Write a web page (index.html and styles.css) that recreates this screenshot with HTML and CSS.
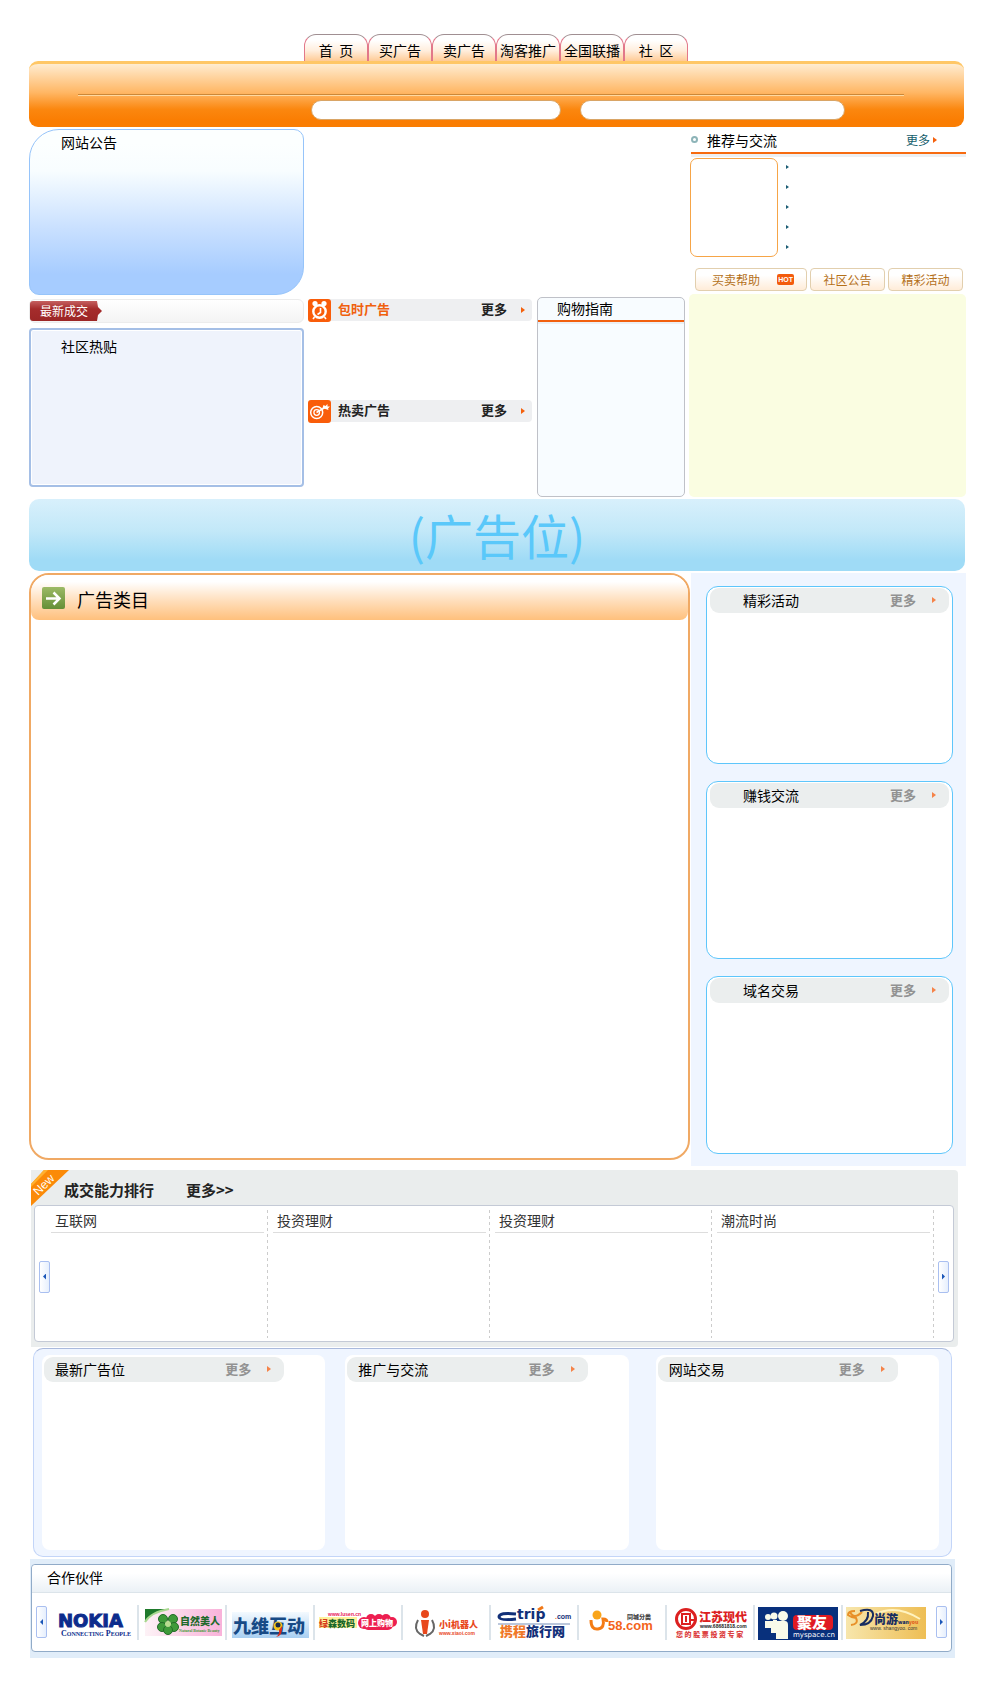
FILE: index.html
```html
<!DOCTYPE html>
<html lang="zh-CN">
<head>
<meta charset="utf-8">
<meta name="viewport" content="width=device-width, initial-scale=1">
<title>广告交易</title>
<link rel="stylesheet" href="styles.css">
</head>
<body>
<div class="page">
  <nav class="tabs">
    <a href="#">首&nbsp; 页</a>
    <a href="#">买广告</a>
    <a href="#">卖广告</a>
    <a href="#">淘客推广</a>
    <a href="#">全国联播</a>
    <a href="#">社&nbsp; 区</a>
  </nav>
  <header class="masthead">
    <hr class="rule">
    <form class="search">
      <input class="field" type="text" aria-label="关键词">
      <input class="field field-wide" type="text" aria-label="搜索">
    </form>
  </header>

  <div class="top">
    <div class="left">
      <section class="notice"><h2>网站公告</h2></section>
      <section class="deals"><h2>最新成交</h2></section>
      <section class="posts"><h2>社区热贴</h2></section>
    </div>

    <div class="center">
      <div class="slot"></div>
      <div class="center-row">
        <div class="ads">
          <section class="ad-block">
            <div class="ad-head">
              <svg class="ad-icon" viewBox="0 0 23 23" aria-hidden="true">
                <rect width="23" height="23" rx="3" fill="#f95d0a"/>
                <circle cx="7" cy="4.500" r="2.600" fill="#fff"/><circle cx="16" cy="4.500" r="2.600" fill="#fff"/>
                <circle cx="11.500" cy="12.500" r="6.200" fill="#f95d0a" stroke="#fff" stroke-width="2.400"/>
                <path d="M12.500 9v4.500l-3 2M6.500 18l-1.500 2M16.500 18l1.500 2" fill="none" stroke="#fff" stroke-width="1.600"/>
              </svg>
              <h2 class="hot">包时广告</h2>
              <a href="#">更多</a><i class="arrow"></i>
            </div>
          </section>
          <section class="ad-block">
            <div class="ad-head">
              <svg class="ad-icon" viewBox="0 0 23 23" aria-hidden="true">
                <rect width="23" height="23" rx="3" fill="#f95d0a"/>
                <circle cx="8.700" cy="12.500" r="6" fill="none" stroke="#fff" stroke-width="1.500"/>
                <circle cx="8.700" cy="12.500" r="2.800" fill="none" stroke="#fff" stroke-width="1.300"/>
                <path d="M8.500 12.500L17 7.500" stroke="#fff" stroke-width="1.500"/>
                <path d="M14.500 8l1-3 2 1 2-2 0 2.500 2.500 0-2 2 .5 1.500z" fill="#fff"/>
              </svg>
              <h2>热卖广告</h2>
              <a href="#">更多</a><i class="arrow"></i>
            </div>
          </section>
        </div>
        <section class="guide"><h2>购物指南</h2></section>
      </div>
    </div>

    <div class="right">
      <div class="rec-head">
        <i class="ring"></i><h2>推荐与交流</h2><a href="#">更多</a><i class="arrow"></i>
      </div>
      <div class="rec-body">
        <div class="thumb"></div>
        <ul class="bullets"><li></li><li></li><li></li><li></li><li></li></ul>
      </div>
      <div class="pills">
        <button type="button" class="pill pill-hot">买卖帮助<span class="badge">HOT</span></button>
        <button type="button" class="pill">社区公告</button>
        <button type="button" class="pill">精彩活动</button>
      </div>
      <div class="pane"></div>
    </div>
  </div>

  <div class="banner">(广告位)</div>

  <div class="main">
    <section class="catalog">
      <div class="catalog-head">
        <svg class="go" viewBox="0 0 23 22" aria-hidden="true">
          <defs><linearGradient id="leaf" x1="0" y1="0" x2="0" y2="1"><stop offset="0" stop-color="#9cba66"/><stop offset="1" stop-color="#658f36"/></linearGradient></defs>
          <rect width="23" height="22" rx="2" fill="url(#leaf)"/>
          <path d="M4 11.500h13M11.500 5.500l6 6-6 6" fill="none" stroke="#fff" stroke-width="2.500"/>
        </svg>
        <h2>广告类目</h2>
      </div>
    </section>
    <aside class="side">
      <section class="card"><div class="bar"><h2>精彩活动</h2><a href="#">更多</a><i class="arrow"></i></div></section>
      <section class="card"><div class="bar"><h2>赚钱交流</h2><a href="#">更多</a><i class="arrow"></i></div></section>
      <section class="card"><div class="bar"><h2>域名交易</h2><a href="#">更多</a><i class="arrow"></i></div></section>
    </aside>
  </div>

  <section class="rank">
    <svg class="ribbon" viewBox="0 0 38 36" aria-hidden="true">
      <path d="M13 0h25L0 36V14z" fill="#fb8a08"/>
      <path d="M13 0h4L0 17v-3z" fill="#ffb030"/>
      <text x="7" y="26" transform="rotate(-44 7 26)" class="ribbon-text">New</text>
    </svg>
    <div class="rank-head"><h2>成交能力排行</h2><a href="#">更多&gt;&gt;</a></div>
    <div class="rank-panel">
      <button type="button" class="step" aria-label="上一页"><i class="tri tri-left"></i></button>
      <div class="rank-cols">
        <div class="rank-col"><h3>互联网</h3></div>
        <div class="rank-col"><h3>投资理财</h3></div>
        <div class="rank-col"><h3>投资理财</h3></div>
        <div class="rank-col"><h3>潮流时尚</h3></div>
      </div>
      <button type="button" class="step" aria-label="下一页"><i class="tri"></i></button>
    </div>
  </section>

  <div class="trio">
    <section class="tile"><div class="bar"><h2>最新广告位</h2><a href="#">更多</a><i class="arrow"></i></div></section>
    <section class="tile"><div class="bar"><h2>推广与交流</h2><a href="#">更多</a><i class="arrow"></i></div></section>
    <section class="tile"><div class="bar"><h2>网站交易</h2><a href="#">更多</a><i class="arrow"></i></div></section>
  </div>

  <footer class="partners">
    <div class="partners-panel">
      <h2>合作伙伴</h2>
      <div class="strip">
        <button type="button" class="step" aria-label="向左"><i class="tri tri-left"></i></button>
        <div class="logos">
          <a href="#"><svg viewBox="0 0 80 36">
            <text x="4" y="22" font-family="DejaVu Sans" font-weight="bold" font-size="18" fill="#0c2c8c" stroke="#0c2c8c">NOKIA</text>
            <text x="7" y="31" font-family="Liberation Serif" font-weight="bold" font-size="8" fill="#0c2c8c">C<tspan font-size="6">ONNECTING</tspan> P<tspan font-size="6">EOPLE</tspan></text>
          </svg></a>
          <a href="#"><svg viewBox="0 0 80 36">
            <defs><linearGradient id="rose"><stop offset="0" stop-color="#fdf2f6"/><stop offset="1" stop-color="#f9b2da"/></linearGradient></defs>
            <rect x="3" y="4" width="77" height="27" fill="url(#rose)"/>
            <path d="M3 4h24Q9 7 3 17z" fill="#1f7a2c"/><path d="M27 4Q9 7 3 17" fill="none" stroke="#a8d890" stroke-width="2"/>
            <g fill="#3f9a3a" stroke="#226c28"><circle cx="21" cy="14" r="4.500"/><circle cx="31" cy="14" r="4.500"/><circle cx="20" cy="22" r="4.500"/><circle cx="32" cy="22" r="4.500"/><circle cx="26" cy="25" r="4.500"/></g>
            <circle cx="26" cy="19" r="3" fill="#b8dc90"/>
            <text x="38" y="20" class="cn" font-size="10" fill="#1e6a2a">自然美人</text>
            <text x="37" y="27" font-family="Liberation Serif" font-weight="bold" font-size="4" fill="#3f9a3a">Natural Botanic Beauty</text>
          </svg></a>
          <a href="#"><svg viewBox="0 0 80 36">
            <defs><linearGradient id="sky" x1="0" y1="0" x2="0" y2="1"><stop offset="0" stop-color="#f4faff"/><stop offset="1" stop-color="#a8cff2"/></linearGradient></defs>
            <rect x="2" y="7" width="77" height="26" fill="url(#sky)"/>
            <text x="3" y="28" class="cn" font-size="18" fill="#174a86">九维互动</text>
            <circle cx="48" cy="21" r="4.500" fill="#f5c51c"/><circle cx="48" cy="20" r="2.500" fill="#182848"/>
            <path d="M52 21q1 10-6 11q4-3 3-7z" fill="#d92c1c"/>
          </svg></a>
          <a href="#"><svg viewBox="0 0 80 36">
            <rect x="1" y="12" width="38" height="11" fill="#fff29c"/>
            <text x="1" y="22" class="cn" font-size="9" fill="#17672b"><tspan fill="#d53a1a">绿</tspan>森数码</text>
            <text x="10" y="11" font-family="Liberation Sans" font-weight="bold" font-size="5" fill="#e82058">www.lusen.cn</text>
            <g fill="#ed1e50"><circle cx="46" cy="18" r="6"/><circle cx="53" cy="14" r="5"/><circle cx="61" cy="14" r="5"/><circle cx="68" cy="14" r="5"/><circle cx="74" cy="17" r="5"/><rect x="45" y="13" width="30" height="12" rx="5"/></g>
            <text x="43" y="21" class="cn" font-size="8" fill="#fff">网上购物</text>
          </svg></a>
          <a href="#"><svg viewBox="0 0 80 36">
            <circle cx="19" cy="9" r="4" fill="#e8481c"/><path d="M15 15h8l-2 14h-4z" fill="#e8481c"/>
            <path d="M12 15q-5 9 2 14l4 2M26 15q5 9-2 14l-4 2" fill="none" stroke="#666" stroke-width="2"/>
            <text x="33" y="23" class="cn" font-size="9" fill="#e8481c">小i机器人</text>
            <text x="33" y="30" font-family="Liberation Sans" font-weight="bold" font-size="5" fill="#e8481c">www.xiaoi.com</text>
          </svg></a>
          <a href="#"><svg viewBox="0 0 80 36">
            <path d="M22 9Q5 7 5 12Q6 16 22 14" fill="none" stroke="#123078" stroke-width="3"/>
            <text x="23" y="14" font-family="DejaVu Sans" font-weight="bold" font-size="14" fill="#123078">trip</text>
            <path d="M44 5l5-3" stroke="#f07818" stroke-width="3"/>
            <text x="61" y="14" font-family="Liberation Sans" font-weight="bold" font-size="7" fill="#123078"><tspan fill="#f07828">.</tspan>com</text>
            <path d="M4 19h72" stroke="#7890b8"/>
            <text x="6" y="31" class="cn" font-size="13" fill="#123078"><tspan fill="#f07828">携程</tspan>旅行网</text>
          </svg></a>
          <a href="#"><svg viewBox="0 0 80 36">
            <circle cx="15" cy="10" r="4.500" fill="#f9a51a"/><path d="M9 15q0 10 7 9q7-1 5-10q4 0 4 3" fill="none" stroke="#f47c14" stroke-width="3"/>
            <text x="26" y="25" font-family="Liberation Sans" font-weight="bold" font-size="13" fill="#f4641a">58.com</text>
            <text x="45" y="14" class="cn" font-size="6" fill="#444">同城分类</text>
          </svg></a>
          <a href="#"><svg viewBox="0 0 80 36">
            <circle cx="16" cy="14" r="9.500" fill="#fff" stroke="#dc2020" stroke-width="3"/>
            <rect x="12" y="9" width="8" height="10" fill="none" stroke="#dc2020" stroke-width="2"/><path d="M16 11v6M21 15h5" stroke="#dc2020" stroke-width="2"/>
            <text x="29" y="17" class="cn" font-size="12" fill="#dc2020">江苏现代</text>
            <text x="30" y="23" font-family="Liberation Sans" font-weight="bold" font-size="5" fill="#222">www.68681818.com</text>
            <text x="6" y="32" class="cn" font-size="7" fill="#dc4040">您 的 股 票 投 资 专 家</text>
          </svg></a>
          <a href="#"><svg viewBox="0 0 80 36">
            <rect y="2" width="80" height="33" fill="#08307c"/>
            <g fill="#f8faea"><circle cx="10" cy="12" r="3"/><circle cx="16" cy="11" r="3.500"/><circle cx="25" cy="11" r="5"/><path d="M7 16h8v-1h4v1h8q3 0 3 4v14H18v-6h-5v-5H7z"/></g>
            <rect x="35" y="10" width="40" height="15" rx="4" fill="#e01a22"/>
            <text x="39" y="23" class="cn" font-size="15" fill="#fff">聚友</text>
            <text x="35" y="32" font-family="DejaVu Sans" font-size="7" fill="#fff">myspace.cn</text>
          </svg></a>
          <a href="#"><svg viewBox="0 0 80 36">
            <defs><linearGradient id="gold"><stop offset="0" stop-color="#f7e6ac"/><stop offset="1" stop-color="#eebe54"/></linearGradient></defs>
            <rect y="2" width="80" height="32" fill="url(#gold)"/>
            <path d="M9 6q-7 0-7 4q4 3 8 3q3 6-5 7M4 7q4 8 12 0" fill="none" stroke="#e89028" stroke-width="2"/>
            <path d="M14 6q14-4 13 5q-2 9-13 9q9-4 8-13" fill="none" stroke="#172c60" stroke-width="2"/>
            <path d="M30 9q20-10 44 5" fill="none" stroke="#fff3c0" stroke-width="2"/>
            <text x="28" y="19" class="cn" font-size="12" fill="#172c60">尚游<tspan font-size="5">wan</tspan><tspan font-size="5" fill="#e06020">you</tspan></text>
            <text x="24" y="25" font-family="Liberation Sans" font-size="5" fill="#333">www. shangyoo. com</text>
          </svg></a>
        </div>
        <button type="button" class="step" aria-label="向右"><i class="tri"></i></button>
      </div>
    </div>
  </footer>
</div>
</body>
</html>
```
FILE: styles.css
```css
* { box-sizing: border-box; }

body {
  margin: 0;
  background: #fff;
  color: #000;
  font: 14px/20px "Noto Sans CJK SC", sans-serif;
}

h2, h3 { margin: 0; font-size: 14px; line-height: 20px; font-weight: 400; }
a { color: inherit; text-decoration: none; }
button { font: inherit; padding: 0; cursor: pointer; }

.page { padding: 34px 34px 28px 29px; }

.arrow {
  width: 0;
  height: 0;
  border: solid transparent;
  border-width: 3px 0 3px 4px;
  border-left-color: #f4600c;
}

/* Tabs and header */
.tabs { display: flex; margin-left: 275px; }
.tabs a {
  width: 64px;
  height: 27px;
  padding-top: 5px;
  line-height: 20px;
  text-align: center;
  white-space: nowrap;
  border: 1px solid #e2788a;
  border-top-color: #a08f92;
  border-bottom: 0;
  border-radius: 12px 12px 0 0;
  background: linear-gradient(#fff 20%, #ffeedd 60%, #ffcb96);
}

.masthead {
  height: 66px;
  margin-right: 2px;
  border-top: 3px solid #ffc766;
  border-radius: 9px;
  padding-top: 30px;
  background: linear-gradient(#ffecd0, #ffb765 45%, #fb870f 72%, #fa7d02 90%);
}
.rule {
  height: 2px;
  margin: 0 60px 0 49px;
  border: 0;
  background: linear-gradient(#cc8838 50%, #ffd9a0 50%);
}
.search { display: flex; gap: 19px; padding: 4px 119px 0 282px; }
.field {
  flex: 250;
  min-width: 0;
  height: 20px;
  padding: 0 10px;
  border: 1px solid #d9a566;
  border-radius: 10px;
  background: #fff;
  font: inherit;
}
.field-wide { flex: 267; }

/* Upper three columns */
.top { display: flex; gap: 4px; }
.left { width: 275px; padding-top: 2px; }
.notice {
  height: 166px;
  padding: 2px 0 0 31px;
  border: 1px solid #96c4fa;
  border-radius: 30px 10px 28px 10px;
  background: linear-gradient(#fcffff 8%, #f8fdff 25%, #c9e0ff 60%, #a6ccff 88%);
}
.deals {
  height: 24px;
  margin-top: 4px;
  padding-top: 1px;
  border: 1px solid #ececec;
  border-radius: 6px;
  background: linear-gradient(#fff, #f4f4f4);
}
.deals h2 {
  width: 72px;
  height: 20px;
  padding-left: 10px;
  font-size: 12px;
  color: #fff;
  border-radius: 3px;
  background: linear-gradient(#c56060, #a52c2c 40%, #9c2626);
  clip-path: polygon(0 0, 67px 0, 68px 6px, 100% 50%, 68px 14px, 67px 100%, 0 100%);
}
.posts {
  height: 159px;
  margin-top: 5px;
  padding: 6px 0 0 30px;
  border: 2px solid #a5bfe6;
  border-radius: 4px;
  background: #eff3fc;
  box-shadow: inset 0 0 0 1px #fff;
}

.center { flex: 1; display: flex; flex-direction: column; }
.slot { height: 170px; }
.center-row { display: flex; gap: 5px; flex: 1; }
.ads { flex: 1; display: flex; flex-direction: column; gap: 79px; padding-top: 2px; }
.ad-head {
  display: flex;
  align-items: center;
  height: 22px;
  padding-right: 7px;
  border-radius: 4px;
  background: #eeeff1;
}
.ad-icon { width: 23px; height: 23px; }
.ad-head h2, .ad-head a {
  padding-bottom: 2px;
  font-size: 13px;
  line-height: 18px;
  font-weight: 700;
  color: #222;
}
.ad-head h2 { flex: 1; padding-left: 7px; }
.ad-head .hot { color: #f0600e; }
.ad-head a { margin-right: 14px; }
.guide {
  width: 148px;
  height: 200px;
  border: 1px solid #bfc1c8;
  border-radius: 5px;
  background: #f8fcff;
}
.guide h2 {
  height: 24px;
  padding: 0 0 0 19px;
  border-bottom: 2px solid #f2600f;
  box-shadow: 0 2px 0 #eceff3;
}

.right { width: 277px; }
.rec-head {
  display: flex;
  align-items: center;
  height: 27px;
  margin-left: 2px;
  padding-right: 29px;
  border-bottom: 2px solid #f76b10;
  box-shadow: 0 3px 0 #eef0f2;
}
.ring { width: 7px; height: 7px; border: 2px solid #8db4b8; border-radius: 50%; }
.rec-head h2 { flex: 1; padding-left: 9px; }
.rec-head a { padding-right: 3px; font-size: 12px; color: #155e6c; }
.rec-body { display: flex; gap: 8px; margin: 4px 0 0 1px; }
.thumb { width: 88px; height: 99px; border: 1px solid #f6a548; border-radius: 7px; }
.bullets { margin: 0; padding: 7px 0 0; list-style: none; }
.bullets li {
  width: 3px;
  height: 4px;
  background: #1b5c74;
  clip-path: polygon(0 0, 100% 50%, 0 100%);
}
.bullets li + li { margin-top: 16px; }
.pills {
  display: grid;
  grid-template-columns: 112fr 75fr 75fr;
  gap: 3px;
  margin: 11px 3px 3px 6px;
}
.pill {
  height: 23px;
  border: 1px solid #e2cfae;
  border-radius: 4px;
  background: linear-gradient(#fff 30%, #ffecd8);
  color: #b4701a;
  font-size: 12px;
  line-height: 20px;
}
.pill-hot { display: flex; align-items: center; justify-content: space-between; padding: 0 12px 0 16px; }
.badge {
  padding: 0 1px;
  border-radius: 2px;
  background: #f35b0c;
  color: #fff;
  font: bold 7px/11px "Liberation Sans", sans-serif;
}
.pane { height: 203px; border-radius: 5px; background: #fafde1; }

.banner {
  height: 72px;
  margin: 2px 1px 2px 0;
  border-radius: 10px;
  background: linear-gradient(#d8f0fc, #c2e8f8 45%, #9fdbf6 85%);
  color: #5ac8fa;
  font-size: 48px;
  line-height: 70px;
  text-align: center;
}

/* Catalogue and sidebar */
.main { display: flex; gap: 1px; }
.catalog { flex: 1; height: 587px; border: 2px solid #f0a964; border-radius: 20px; }
.catalog-head {
  display: flex;
  align-items: center;
  gap: 12px;
  height: 45px;
  padding-left: 11px;
  border-radius: 18px 18px 8px 8px;
  background: linear-gradient(#fff 15%, #ffe0bf 55%, #ffc07c);
}
.catalog-head h2 { font-size: 18px; line-height: 24px; padding-top: 2px; }
.go { width: 23px; height: 22px; }

.side {
  display: flex;
  flex-direction: column;
  gap: 17px;
  width: 275px;
  height: 593px;
  padding: 13px 13px 0 15px;
  background: #eff5ff;
}
.card { height: 178px; padding: 1px 3px; border: 1px solid #5ec6fb; border-radius: 12px; background: #fff; }
.bar {
  display: flex;
  align-items: center;
  height: 25px;
  padding-right: 13px;
  padding-bottom: 1px;
  border-radius: 9px;
  background: #ebeeee;
}
.bar h2 { flex: 1; }
.bar a { margin-right: 16px; font-size: 13px; font-weight: 700; color: #929292; }
.bar .arrow { border-left-color: #f58348; }
.card .bar { padding-left: 33px; }

/* Ranking */
.rank {
  position: relative;
  margin: 4px 8px 0 2px;
  padding: 0 4px 5px 3px;
  border-radius: 0 4px 4px 0;
  background: #eaeded;
}
.ribbon { position: absolute; left: 0; top: 0; width: 38px; height: 36px; }
.ribbon-text { font: 12px "Liberation Sans", sans-serif; fill: #fff; }
.rank-head { display: flex; gap: 32px; height: 35px; padding: 10px 0 0 30px; }
.rank-head h2, .rank-head a { font-size: 15px; line-height: 20px; font-weight: 700; color: #222; }
.rank-panel {
  display: flex;
  align-items: center;
  height: 137px;
  padding: 0 4px;
  border: 1px solid #c4cad6;
  border-radius: 4px;
  background: #fff;
}
.step {
  display: flex;
  align-items: center;
  justify-content: center;
  flex: none;
  width: 11px;
  height: 32px;
  border: 1px solid #a9bff0;
  border-radius: 2px;
  background: linear-gradient(90deg, #fff, #e6effd);
}
.rank-panel .step { margin-top: 6px; }
.tri { width: 3px; height: 6px; background: #1b57b8; clip-path: polygon(0 0, 100% 50%, 0 100%); }
.tri-left { clip-path: polygon(100% 0, 0 50%, 100% 100%); }
.rank-cols { display: grid; grid-template-columns: repeat(4, 1fr); flex: 1; margin: 0 4px 0 -4px; }
.rank-col {
  height: 128px;
  padding: 0 4px 0 5px;
  background: repeating-linear-gradient(#ccc 0 3px, transparent 3px 6px) right / 1px 100% no-repeat;
}
.rank-col h3 { height: 23px; padding-left: 4px; border-bottom: 1px solid #ddd; color: #333; }

.trio {
  display: flex;
  gap: 20px;
  height: 209px;
  margin: 1px 14px 2px 4px;
  padding: 6px 12px 0 8px;
  border: 1px solid #c3d5f8;
  border-top-color: #a9b9dc;
  border-radius: 10px;
  background: #eff5ff;
}
.tile { flex: 1; height: 195px; padding: 2px; border-radius: 8px; background: #fff; }
.tile:last-child { margin-left: 7px; }
.tile .bar { width: 86%; padding-left: 11px; }

/* Partners */
.partners { margin: 0 11px 0 1px; padding: 5px 3px 6px 1px; background: #e1edf9; }
.partners-panel { border: 1px solid #91abc8; border-radius: 4px; background: #fff; }
.partners-panel h2 {
  height: 28px;
  padding: 2px 0 0 15px;
  border-bottom: 1px solid #dce4ea;
  border-radius: 4px 4px 0 0;
  background: linear-gradient(#fff 30%, #ebf1f6);
}
.strip { display: flex; align-items: center; height: 58px; padding: 0 4px; }
.logos { display: flex; flex: 1; margin: 0 5px 0 4px; }
.logos a {
  flex: 1;
  height: 35px;
  text-align: center;
  line-height: 0;
  border-right: 2px solid #dce4ea;
}
.logos a:last-child { border-right-color: transparent; }
.logos svg { width: 80px; height: 36px; }
.cn { font-family: "Noto Sans CJK SC", sans-serif; font-weight: 900; }
```
